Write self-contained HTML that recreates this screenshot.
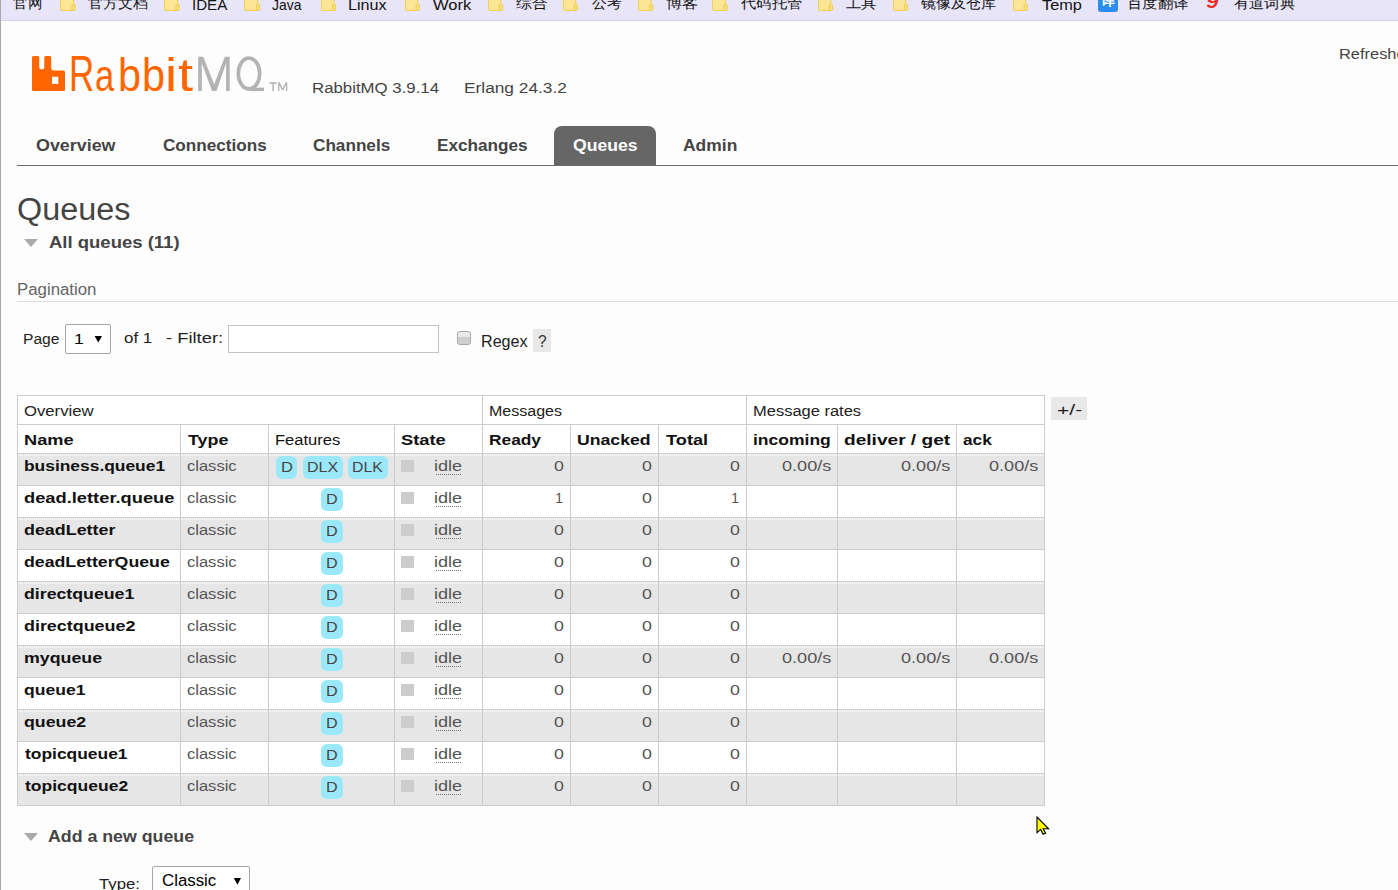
<!DOCTYPE html><html><head><meta charset="utf-8"><title>RabbitMQ Management</title><style>
html,body{margin:0;padding:0}body{width:1398px;height:890px;overflow:hidden;position:relative;background:#fdfdfd;font-family:"Liberation Sans",sans-serif}
.a{position:absolute}.tx{position:absolute;white-space:pre;transform-origin:0 0}
.hl{position:absolute;height:1px;background:#ccc}.vl{position:absolute;width:1px;background:#ccc}
.dot{position:absolute;height:2px;background-image:linear-gradient(to right,rgba(255,255,255,.85) 50%,transparent 50%);background-size:2px 2px}
.badge{position:absolute;background:#9ce8fb;border-radius:6px;height:23px}
</style></head><body>
<div class="a" style="left:0;top:0;width:1px;height:890px;background:#a9a9a9"></div>
<div class="a" style="left:1px;top:0;width:1397px;height:20px;background:#e8e5f8;border-bottom:1px solid #d7d1ee"></div>
<svg style="position:absolute;left:59.9px;top:0" width="17.5" height="12" viewBox="0 0 17.5 12"><rect x="0.5" y="-2" width="13.0" height="12.5" rx="1" fill="#fce594" stroke="#f3d250" stroke-width="1"/><rect x="12.0" y="4.5" width="3.2" height="6" rx="1.2" fill="#fbe07a" stroke="#eccb48" stroke-width="1"/></svg>
<svg style="position:absolute;left:164.2px;top:0" width="17.5" height="12" viewBox="0 0 17.5 12"><rect x="0.5" y="-2" width="13.0" height="12.5" rx="1" fill="#fce594" stroke="#f3d250" stroke-width="1"/><rect x="12.0" y="4.5" width="3.2" height="6" rx="1.2" fill="#fbe07a" stroke="#eccb48" stroke-width="1"/></svg>
<svg style="position:absolute;left:244.1px;top:0" width="17.9" height="12" viewBox="0 0 17.9 12"><rect x="0.5" y="-2" width="13.4" height="12.5" rx="1" fill="#fce594" stroke="#f3d250" stroke-width="1"/><rect x="12.4" y="4.5" width="3.2" height="6" rx="1.2" fill="#fbe07a" stroke="#eccb48" stroke-width="1"/></svg>
<svg style="position:absolute;left:321.4px;top:0" width="17.0" height="12" viewBox="0 0 17.0 12"><rect x="0.5" y="-2" width="12.5" height="12.5" rx="1" fill="#fce594" stroke="#f3d250" stroke-width="1"/><rect x="11.5" y="4.5" width="3.2" height="6" rx="1.2" fill="#fbe07a" stroke="#eccb48" stroke-width="1"/></svg>
<svg style="position:absolute;left:405.1px;top:0" width="16.6" height="12" viewBox="0 0 16.6 12"><rect x="0.5" y="-2" width="12.1" height="12.5" rx="1" fill="#fce594" stroke="#f3d250" stroke-width="1"/><rect x="11.1" y="4.5" width="3.2" height="6" rx="1.2" fill="#fbe07a" stroke="#eccb48" stroke-width="1"/></svg>
<svg style="position:absolute;left:488.0px;top:0" width="16.9" height="12" viewBox="0 0 16.9 12"><rect x="0.5" y="-2" width="12.4" height="12.5" rx="1" fill="#fce594" stroke="#f3d250" stroke-width="1"/><rect x="11.4" y="4.5" width="3.2" height="6" rx="1.2" fill="#fbe07a" stroke="#eccb48" stroke-width="1"/></svg>
<svg style="position:absolute;left:562.9px;top:0" width="16.7" height="12" viewBox="0 0 16.7 12"><rect x="0.5" y="-2" width="12.2" height="12.5" rx="1" fill="#fce594" stroke="#f3d250" stroke-width="1"/><rect x="11.2" y="4.5" width="3.2" height="6" rx="1.2" fill="#fbe07a" stroke="#eccb48" stroke-width="1"/></svg>
<svg style="position:absolute;left:638.1px;top:0" width="17.0" height="12" viewBox="0 0 17.0 12"><rect x="0.5" y="-2" width="12.5" height="12.5" rx="1" fill="#fce594" stroke="#f3d250" stroke-width="1"/><rect x="11.5" y="4.5" width="3.2" height="6" rx="1.2" fill="#fbe07a" stroke="#eccb48" stroke-width="1"/></svg>
<svg style="position:absolute;left:712.3px;top:0" width="17.4" height="12" viewBox="0 0 17.4 12"><rect x="0.5" y="-2" width="12.9" height="12.5" rx="1" fill="#fce594" stroke="#f3d250" stroke-width="1"/><rect x="11.9" y="4.5" width="3.2" height="6" rx="1.2" fill="#fbe07a" stroke="#eccb48" stroke-width="1"/></svg>
<svg style="position:absolute;left:817.9px;top:0" width="16.9" height="12" viewBox="0 0 16.9 12"><rect x="0.5" y="-2" width="12.4" height="12.5" rx="1" fill="#fce594" stroke="#f3d250" stroke-width="1"/><rect x="11.4" y="4.5" width="3.2" height="6" rx="1.2" fill="#fbe07a" stroke="#eccb48" stroke-width="1"/></svg>
<svg style="position:absolute;left:892.6px;top:0" width="16.8" height="12" viewBox="0 0 16.8 12"><rect x="0.5" y="-2" width="12.3" height="12.5" rx="1" fill="#fce594" stroke="#f3d250" stroke-width="1"/><rect x="11.3" y="4.5" width="3.2" height="6" rx="1.2" fill="#fbe07a" stroke="#eccb48" stroke-width="1"/></svg>
<svg style="position:absolute;left:1013.1px;top:0" width="16.6" height="12" viewBox="0 0 16.6 12"><rect x="0.5" y="-2" width="12.1" height="12.5" rx="1" fill="#fce594" stroke="#f3d250" stroke-width="1"/><rect x="11.1" y="4.5" width="3.2" height="6" rx="1.2" fill="#fbe07a" stroke="#eccb48" stroke-width="1"/></svg>
<div class="a" style="left:1098px;top:-4px;width:20px;height:16px;background:#2b8cf2;border-radius:3px"></div>
<div class="a" style="left:1101px;top:-7px;font:bold 14px/14px 'Liberation Sans',sans-serif;color:#fff">译</div>
<div class="a" style="left:1207px;top:-8px;font:italic bold 19px/19px 'Liberation Sans',sans-serif;color:#ee2b2b;transform:scaleX(1.15)">9</div>
<svg class="a" style="left:31px;top:55px" width="36" height="38" viewBox="0 0 36 38"><path fill="#ff6600" d="M1,2.5 Q1,1 2.5,1 L6.8,1 Q8.2,1 8.2,2.5 L8.2,12.5 Q8.2,14.2 10,14.2 L11.5,14.2 Q13.3,14.2 13.3,12.5 L13.3,2.5 Q13.3,1 14.8,1 L18.6,1 Q20.2,1 20.2,2.5 L20.2,13 Q20.2,15.5 22.5,15.5 L32.6,15.5 Q34,15.5 34,17 L34,34.5 Q34,36 32.6,36 L2.5,36 Q1,36 1,34.5 Z M21,22.5 L21,28.2 Q21,29 21.8,29 L26.5,29 Q27.3,29 27.3,28.2 L27.3,22.5 Q27.3,21.7 26.5,21.7 L21.8,21.7 Q21,21.7 21,22.5 Z"/></svg>
<svg class="a" style="left:0;top:0" width="300" height="100" viewBox="0 0 300 100"><path fill="#b3b3b3" d="M198.2,91.1 L198.2,56.8 L203.3,56.8 L214.2,84.5 L224.8,56.8 L229.7,56.8 L229.7,91.1 L226.1,91.1 L226.1,63 L216.5,91.1 L212,91.1 L201.8,63 L201.8,91.1 Z"/><ellipse cx="249" cy="73.5" rx="10.7" ry="15.4" fill="none" stroke="#b3b3b3" stroke-width="3.6"/><rect x="249.5" y="87.6" width="14.5" height="3.5" fill="#b3b3b3"/><path fill="#b3b3b3" d="M269.4,82.2 L276.9,82.2 L276.9,83.7 L273.9,83.7 L273.9,91.1 L272.4,91.1 L272.4,83.7 L269.4,83.7 Z"/><path fill="#b3b3b3" d="M278,91.1 L278,82.2 L279.6,82.2 L282.65,88.2 L285.7,82.2 L287.3,82.2 L287.3,91.1 L285.9,91.1 L285.9,85 L283.3,90.2 L282,90.2 L279.4,85 L279.4,91.1 Z"/></svg>
<div class="a" style="left:554px;top:126px;width:102px;height:39px;background:#666;border-radius:8px 8px 0 0"></div>
<div class="a" style="left:17px;top:165px;width:1381px;height:1px;background:#6b6b6b"></div>
<svg class="a" style="left:24px;top:239px" width="14" height="9" viewBox="0 0 14 9"><path d="M0,0 L14,0 L7,8 Z" fill="#aaa"/></svg>
<svg class="a" style="left:24px;top:833px" width="14" height="9" viewBox="0 0 14 9"><path d="M0,0 L14,0 L7,8 Z" fill="#aaa"/></svg>
<div class="a" style="left:17px;top:301px;width:1381px;height:1px;background:#dcdcdc"></div>
<div class="a" style="left:65px;top:324px;width:44px;height:28px;border:1px solid #a6a6a6;border-radius:2px;background:#fff"></div>
<svg class="a" style="left:94px;top:335px" width="9" height="9" viewBox="0 0 9 9"><path d="M0.6,1 L8,1 L4.3,7.6 Z" fill="#000"/></svg>
<div class="a" style="left:228px;top:325px;width:209px;height:26px;border:1px solid #c4c4c4;background:#fff"></div>
<div class="a" style="left:457px;top:331px;width:12px;height:12px;border:1px solid #a8a8a8;border-radius:3px;background:linear-gradient(#e9e9e9 0,#e9e9e9 40%,#cfcfcf 40%)"></div>
<div class="a" style="left:533px;top:329px;width:18px;height:23px;background:#e8e8e8"></div>
<div class="a" style="left:1051px;top:397px;width:36px;height:23px;background:#e8e8e8"></div>
<div class="a" style="left:17px;top:395px;width:1027px;height:58px;background:#fff"></div>
<div class="a" style="left:17px;top:453px;width:1027px;height:32px;background:#e6e6e6"></div>
<div class="dot" style="left:18px;top:454px;width:1026px"></div>
<div class="a" style="left:17px;top:485px;width:1027px;height:32px;background:#fff"></div>
<div class="a" style="left:17px;top:517px;width:1027px;height:32px;background:#e6e6e6"></div>
<div class="dot" style="left:18px;top:518px;width:1026px"></div>
<div class="a" style="left:17px;top:549px;width:1027px;height:32px;background:#fff"></div>
<div class="a" style="left:17px;top:581px;width:1027px;height:32px;background:#e6e6e6"></div>
<div class="dot" style="left:18px;top:582px;width:1026px"></div>
<div class="a" style="left:17px;top:613px;width:1027px;height:32px;background:#fff"></div>
<div class="a" style="left:17px;top:645px;width:1027px;height:32px;background:#e6e6e6"></div>
<div class="dot" style="left:18px;top:646px;width:1026px"></div>
<div class="a" style="left:17px;top:677px;width:1027px;height:32px;background:#fff"></div>
<div class="a" style="left:17px;top:709px;width:1027px;height:32px;background:#e6e6e6"></div>
<div class="dot" style="left:18px;top:710px;width:1026px"></div>
<div class="a" style="left:17px;top:741px;width:1027px;height:32px;background:#fff"></div>
<div class="a" style="left:17px;top:773px;width:1027px;height:32px;background:#e6e6e6"></div>
<div class="dot" style="left:18px;top:774px;width:1026px"></div>
<div class="hl" style="left:17px;top:395px;width:1028px"></div>
<div class="hl" style="left:17px;top:424px;width:1028px"></div>
<div class="hl" style="left:17px;top:453px;width:1028px"></div>
<div class="hl" style="left:17px;top:485px;width:1028px"></div>
<div class="hl" style="left:17px;top:517px;width:1028px"></div>
<div class="hl" style="left:17px;top:549px;width:1028px"></div>
<div class="hl" style="left:17px;top:581px;width:1028px"></div>
<div class="hl" style="left:17px;top:613px;width:1028px"></div>
<div class="hl" style="left:17px;top:645px;width:1028px"></div>
<div class="hl" style="left:17px;top:677px;width:1028px"></div>
<div class="hl" style="left:17px;top:709px;width:1028px"></div>
<div class="hl" style="left:17px;top:741px;width:1028px"></div>
<div class="hl" style="left:17px;top:773px;width:1028px"></div>
<div class="hl" style="left:17px;top:805px;width:1028px"></div>
<div class="vl" style="left:17px;top:395px;height:29px"></div>
<div class="vl" style="left:482px;top:395px;height:29px"></div>
<div class="vl" style="left:746px;top:395px;height:29px"></div>
<div class="vl" style="left:1044px;top:395px;height:29px"></div>
<div class="vl" style="left:17px;top:424px;height:382px"></div>
<div class="vl" style="left:180px;top:424px;height:382px"></div>
<div class="vl" style="left:268px;top:424px;height:382px"></div>
<div class="vl" style="left:394px;top:424px;height:382px"></div>
<div class="vl" style="left:482px;top:424px;height:382px"></div>
<div class="vl" style="left:570px;top:424px;height:382px"></div>
<div class="vl" style="left:658px;top:424px;height:382px"></div>
<div class="vl" style="left:746px;top:424px;height:382px"></div>
<div class="vl" style="left:837px;top:424px;height:382px"></div>
<div class="vl" style="left:956px;top:424px;height:382px"></div>
<div class="vl" style="left:1044px;top:424px;height:382px"></div>
<div class="a" style="left:401px;top:460px;width:13px;height:12px;background:#cccccc"></div>
<div class="a" style="left:436px;top:474px;width:25px;height:1px;background-image:linear-gradient(to right,#777 50%,transparent 50%);background-size:2px 1px"></div>
<div class="a" style="left:401px;top:492px;width:13px;height:12px;background:#cccccc"></div>
<div class="a" style="left:436px;top:506px;width:25px;height:1px;background-image:linear-gradient(to right,#777 50%,transparent 50%);background-size:2px 1px"></div>
<div class="a" style="left:401px;top:524px;width:13px;height:12px;background:#cccccc"></div>
<div class="a" style="left:436px;top:538px;width:25px;height:1px;background-image:linear-gradient(to right,#777 50%,transparent 50%);background-size:2px 1px"></div>
<div class="a" style="left:401px;top:556px;width:13px;height:12px;background:#cccccc"></div>
<div class="a" style="left:436px;top:570px;width:25px;height:1px;background-image:linear-gradient(to right,#777 50%,transparent 50%);background-size:2px 1px"></div>
<div class="a" style="left:401px;top:588px;width:13px;height:12px;background:#cccccc"></div>
<div class="a" style="left:436px;top:602px;width:25px;height:1px;background-image:linear-gradient(to right,#777 50%,transparent 50%);background-size:2px 1px"></div>
<div class="a" style="left:401px;top:620px;width:13px;height:12px;background:#cccccc"></div>
<div class="a" style="left:436px;top:634px;width:25px;height:1px;background-image:linear-gradient(to right,#777 50%,transparent 50%);background-size:2px 1px"></div>
<div class="a" style="left:401px;top:652px;width:13px;height:12px;background:#cccccc"></div>
<div class="a" style="left:436px;top:666px;width:25px;height:1px;background-image:linear-gradient(to right,#777 50%,transparent 50%);background-size:2px 1px"></div>
<div class="a" style="left:401px;top:684px;width:13px;height:12px;background:#cccccc"></div>
<div class="a" style="left:436px;top:698px;width:25px;height:1px;background-image:linear-gradient(to right,#777 50%,transparent 50%);background-size:2px 1px"></div>
<div class="a" style="left:401px;top:716px;width:13px;height:12px;background:#cccccc"></div>
<div class="a" style="left:436px;top:730px;width:25px;height:1px;background-image:linear-gradient(to right,#777 50%,transparent 50%);background-size:2px 1px"></div>
<div class="a" style="left:401px;top:748px;width:13px;height:12px;background:#cccccc"></div>
<div class="a" style="left:436px;top:762px;width:25px;height:1px;background-image:linear-gradient(to right,#777 50%,transparent 50%);background-size:2px 1px"></div>
<div class="a" style="left:401px;top:780px;width:13px;height:12px;background:#cccccc"></div>
<div class="a" style="left:436px;top:794px;width:25px;height:1px;background-image:linear-gradient(to right,#777 50%,transparent 50%);background-size:2px 1px"></div>
<div class="a" style="left:152px;top:866px;width:96px;height:30px;border:1px solid #a6a6a6;border-radius:2px;background:#fff"></div>
<svg class="a" style="left:233px;top:877px" width="9" height="9" viewBox="0 0 9 9"><path d="M0.8,1 L8,1 L4.4,7.8 Z" fill="#000"/></svg>
<div class="badge" style="left:276px;top:456px;width:21px"></div>
<div class="badge" style="left:303px;top:456px;width:40px"></div>
<div class="badge" style="left:348px;top:456px;width:40px"></div>
<div class="badge" style="left:321px;top:488px;width:22px"></div>
<div class="badge" style="left:321px;top:520px;width:22px"></div>
<div class="badge" style="left:321px;top:552px;width:22px"></div>
<div class="badge" style="left:321px;top:584px;width:22px"></div>
<div class="badge" style="left:321px;top:616px;width:22px"></div>
<div class="badge" style="left:321px;top:648px;width:22px"></div>
<div class="badge" style="left:321px;top:680px;width:22px"></div>
<div class="badge" style="left:321px;top:712px;width:22px"></div>
<div class="badge" style="left:321px;top:744px;width:22px"></div>
<div class="badge" style="left:321px;top:776px;width:22px"></div>
<span class="tx" style="left:13.40px;top:-3px;font:normal 13.5px/13.5px 'Liberation Sans', sans-serif;color:#111;transform:scaleX(1.0407);">官网</span>
<span class="tx" style="left:88.18px;top:-3px;font:normal 13.5px/13.5px 'Liberation Sans', sans-serif;color:#111;transform:scaleX(1.0785);">官方文档</span>
<span class="tx" style="left:191.55px;top:-3px;font:normal 15px/15px 'Liberation Sans', sans-serif;color:#111;transform:scaleX(1.0080);">IDEA</span>
<span class="tx" style="left:272.46px;top:-3px;font:normal 15px/15px 'Liberation Sans', sans-serif;color:#111;transform:scaleX(0.9282);">Java</span>
<span class="tx" style="left:348.40px;top:-3px;font:normal 15px/15px 'Liberation Sans', sans-serif;color:#111;transform:scaleX(1.0747);">Linux</span>
<span class="tx" style="left:432.88px;top:-3px;font:normal 15px/15px 'Liberation Sans', sans-serif;color:#111;transform:scaleX(1.0998);">Work</span>
<span class="tx" style="left:515.83px;top:-3px;font:normal 13.5px/13.5px 'Liberation Sans', sans-serif;color:#111;transform:scaleX(1.1274);">综合</span>
<span class="tx" style="left:591.70px;top:-3px;font:normal 13.5px/13.5px 'Liberation Sans', sans-serif;color:#111;transform:scaleX(1.0595);">公考</span>
<span class="tx" style="left:666.21px;top:-3px;font:normal 13.5px/13.5px 'Liberation Sans', sans-serif;color:#111;transform:scaleX(1.1582);">博客</span>
<span class="tx" style="left:740.63px;top:-3px;font:normal 13.5px/13.5px 'Liberation Sans', sans-serif;color:#111;transform:scaleX(1.0893);">代码托管</span>
<span class="tx" style="left:846.26px;top:-3px;font:normal 13.5px/13.5px 'Liberation Sans', sans-serif;color:#111;transform:scaleX(1.1014);">工具</span>
<span class="tx" style="left:921.00px;top:-3px;font:normal 13.5px/13.5px 'Liberation Sans', sans-serif;color:#111;transform:scaleX(1.0754);">镜像及仓库</span>
<span class="tx" style="left:1042.18px;top:-3px;font:normal 15px/15px 'Liberation Sans', sans-serif;color:#111;transform:scaleX(1.0885);">Temp</span>
<span class="tx" style="left:1126.76px;top:-3px;font:normal 13.5px/13.5px 'Liberation Sans', sans-serif;color:#111;transform:scaleX(1.1015);">百度翻译</span>
<span class="tx" style="left:1233.72px;top:-3px;font:normal 13.5px/13.5px 'Liberation Sans', sans-serif;color:#111;transform:scaleX(1.0858);">有道词典</span>
<span class="tx" style="left:311.86px;top:80px;font:normal 15.5px/15.5px 'Liberation Sans', sans-serif;color:#444;transform:scaleX(1.0841);">RabbitMQ 3.9.14</span>
<span class="tx" style="left:463.72px;top:80px;font:normal 15.5px/15.5px 'Liberation Sans', sans-serif;color:#444;transform:scaleX(1.1152);">Erlang 24.3.2</span>
<span class="tx" style="left:1339.20px;top:46px;font:normal 15.5px/15.5px 'Liberation Sans', sans-serif;color:#444;transform:scaleX(1.0596);">Refreshe</span>
<span class="tx" style="left:36.43px;top:137px;font:bold 16.5px/16.5px 'Liberation Sans', sans-serif;color:#444;transform:scaleX(1.0834);">Overview</span>
<span class="tx" style="left:162.86px;top:137px;font:bold 16.5px/16.5px 'Liberation Sans', sans-serif;color:#444;transform:scaleX(1.0385);">Connections</span>
<span class="tx" style="left:312.56px;top:137px;font:bold 16.5px/16.5px 'Liberation Sans', sans-serif;color:#444;transform:scaleX(1.0396);">Channels</span>
<span class="tx" style="left:436.54px;top:137px;font:bold 16.5px/16.5px 'Liberation Sans', sans-serif;color:#444;transform:scaleX(1.0396);">Exchanges</span>
<span class="tx" style="left:572.64px;top:137px;font:bold 16.5px/16.5px 'Liberation Sans', sans-serif;color:#fff;transform:scaleX(1.0655);">Queues</span>
<span class="tx" style="left:682.56px;top:137px;font:bold 16.5px/16.5px 'Liberation Sans', sans-serif;color:#444;transform:scaleX(1.0581);">Admin</span>
<span class="tx" style="left:17.31px;top:194px;font:normal 31px/31px 'Liberation Sans', sans-serif;color:#444;transform:scaleX(1.0444);">Queues</span>
<span class="tx" style="left:48.61px;top:235px;font:bold 16px/16px 'Liberation Sans', sans-serif;color:#444;transform:scaleX(1.1560);">All queues (11)</span>
<span class="tx" style="left:16.77px;top:282px;font:normal 16px/16px 'Liberation Sans', sans-serif;color:#666;transform:scaleX(1.0503);">Pagination</span>
<span class="tx" style="left:23.27px;top:331px;font:normal 15.5px/15.5px 'Liberation Sans', sans-serif;color:#222;transform:scaleX(1.0065);">Page</span>
<span class="tx" style="left:124.04px;top:330px;font:normal 15.5px/15.5px 'Liberation Sans', sans-serif;color:#222;transform:scaleX(1.0915);">of 1</span>
<span class="tx" style="left:165.88px;top:330px;font:normal 15.5px/15.5px 'Liberation Sans', sans-serif;color:#222;transform:scaleX(1.1850);">- Filter:</span>
<span class="tx" style="left:481.33px;top:334px;font:normal 16px/16px 'Liberation Sans', sans-serif;color:#222;transform:scaleX(1.0064);">Regex</span>
<span class="tx" style="left:537.93px;top:334px;font:normal 16px/16px 'Liberation Sans', sans-serif;color:#333;transform:scaleX(0.9623);">?</span>
<span class="tx" style="left:74.06px;top:331px;font:normal 15.5px/15.5px 'Liberation Sans', sans-serif;color:#000;transform:scaleX(1.1377);">1</span>
<span class="tx" style="left:1056.98px;top:402px;font:normal 15.5px/15.5px 'Liberation Sans', sans-serif;color:#222;transform:scaleX(1.3634);">+/-</span>
<span class="tx" style="left:24.38px;top:403px;font:normal 15.5px/15.5px 'Liberation Sans', sans-serif;color:#222;transform:scaleX(1.0768);">Overview</span>
<span class="tx" style="left:488.73px;top:403px;font:normal 15.5px/15.5px 'Liberation Sans', sans-serif;color:#222;transform:scaleX(1.0326);">Messages</span>
<span class="tx" style="left:752.79px;top:403px;font:normal 15.5px/15.5px 'Liberation Sans', sans-serif;color:#222;transform:scaleX(1.0635);">Message rates</span>
<span class="tx" style="left:23.84px;top:432px;font:bold 15.5px/15.5px 'Liberation Sans', sans-serif;color:#111;transform:scaleX(1.1741);">Name</span>
<span class="tx" style="left:187.72px;top:432px;font:bold 15.5px/15.5px 'Liberation Sans', sans-serif;color:#111;transform:scaleX(1.1523);">Type</span>
<span class="tx" style="left:275.09px;top:432px;font:normal 15.5px/15.5px 'Liberation Sans', sans-serif;color:#111;transform:scaleX(1.0663);">Features</span>
<span class="tx" style="left:400.86px;top:432px;font:bold 15.5px/15.5px 'Liberation Sans', sans-serif;color:#111;transform:scaleX(1.1804);">State</span>
<span class="tx" style="left:489.31px;top:432px;font:bold 15.5px/15.5px 'Liberation Sans', sans-serif;color:#111;transform:scaleX(1.1178);">Ready</span>
<span class="tx" style="left:576.76px;top:432px;font:bold 15.5px/15.5px 'Liberation Sans', sans-serif;color:#111;transform:scaleX(1.1383);">Unacked</span>
<span class="tx" style="left:666.11px;top:432px;font:bold 15.5px/15.5px 'Liberation Sans', sans-serif;color:#111;transform:scaleX(1.1738);">Total</span>
<span class="tx" style="left:752.96px;top:432px;font:bold 15.5px/15.5px 'Liberation Sans', sans-serif;color:#111;transform:scaleX(1.1289);">incoming</span>
<span class="tx" style="left:844.12px;top:432px;font:bold 15.5px/15.5px 'Liberation Sans', sans-serif;color:#111;transform:scaleX(1.2320);">deliver / get</span>
<span class="tx" style="left:963.41px;top:432px;font:bold 15.5px/15.5px 'Liberation Sans', sans-serif;color:#111;transform:scaleX(1.1113);">ack</span>
<span class="tx" style="left:23.90px;top:458px;font:bold 15.5px/15.5px 'Liberation Sans', sans-serif;color:#111;transform:scaleX(1.1218);">business.queue1</span>
<span class="tx" style="left:187.26px;top:458px;font:normal 15.5px/15.5px 'Liberation Sans', sans-serif;color:#555;transform:scaleX(1.0660);">classic</span>
<span class="tx" style="left:434.03px;top:458px;font:normal 15.5px/15.5px 'Liberation Sans', sans-serif;color:#555;transform:scaleX(1.1648);">idle</span>
<span class="tx" style="left:554.14px;top:458px;font:normal 15.5px/15.5px 'Liberation Sans', sans-serif;color:#555;transform:scaleX(1.1472);">0</span>
<span class="tx" style="left:642.14px;top:458px;font:normal 15.5px/15.5px 'Liberation Sans', sans-serif;color:#555;transform:scaleX(1.1472);">0</span>
<span class="tx" style="left:730.14px;top:458px;font:normal 15.5px/15.5px 'Liberation Sans', sans-serif;color:#555;transform:scaleX(1.1472);">0</span>
<span class="tx" style="left:782.43px;top:458px;font:normal 15.5px/15.5px 'Liberation Sans', sans-serif;color:#555;transform:scaleX(1.1698);">0.00/s</span>
<span class="tx" style="left:901.43px;top:458px;font:normal 15.5px/15.5px 'Liberation Sans', sans-serif;color:#555;transform:scaleX(1.1698);">0.00/s</span>
<span class="tx" style="left:989.43px;top:458px;font:normal 15.5px/15.5px 'Liberation Sans', sans-serif;color:#555;transform:scaleX(1.1698);">0.00/s</span>
<span class="tx" style="left:280.52px;top:460px;font:normal 14px/14px 'Liberation Sans', sans-serif;color:#444;transform:scaleX(1.1839)">D</span>
<span class="tx" style="left:306.88px;top:460px;font:normal 14px/14px 'Liberation Sans', sans-serif;color:#444;transform:scaleX(1.1427)">DLX</span>
<span class="tx" style="left:352.49px;top:460px;font:normal 14px/14px 'Liberation Sans', sans-serif;color:#444;transform:scaleX(1.1281)">DLK</span>
<span class="tx" style="left:24.36px;top:490px;font:bold 15.5px/15.5px 'Liberation Sans', sans-serif;color:#111;transform:scaleX(1.1800);">dead.letter.queue</span>
<span class="tx" style="left:187.26px;top:490px;font:normal 15.5px/15.5px 'Liberation Sans', sans-serif;color:#555;transform:scaleX(1.0660);">classic</span>
<span class="tx" style="left:434.03px;top:490px;font:normal 15.5px/15.5px 'Liberation Sans', sans-serif;color:#555;transform:scaleX(1.1648);">idle</span>
<span class="tx" style="left:555.01px;top:490px;font:normal 15.5px/15.5px 'Liberation Sans', sans-serif;color:#555;transform:scaleX(0.9405);">1</span>
<span class="tx" style="left:642.14px;top:490px;font:normal 15.5px/15.5px 'Liberation Sans', sans-serif;color:#555;transform:scaleX(1.1472);">0</span>
<span class="tx" style="left:731.01px;top:490px;font:normal 15.5px/15.5px 'Liberation Sans', sans-serif;color:#555;transform:scaleX(0.9405);">1</span>
<span class="tx" style="left:326.06px;top:492px;font:normal 14px/14px 'Liberation Sans', sans-serif;color:#444;transform:scaleX(1.1536)">D</span>
<span class="tx" style="left:24.38px;top:522px;font:bold 15.5px/15.5px 'Liberation Sans', sans-serif;color:#111;transform:scaleX(1.1537);">deadLetter</span>
<span class="tx" style="left:187.26px;top:522px;font:normal 15.5px/15.5px 'Liberation Sans', sans-serif;color:#555;transform:scaleX(1.0660);">classic</span>
<span class="tx" style="left:434.03px;top:522px;font:normal 15.5px/15.5px 'Liberation Sans', sans-serif;color:#555;transform:scaleX(1.1648);">idle</span>
<span class="tx" style="left:554.14px;top:522px;font:normal 15.5px/15.5px 'Liberation Sans', sans-serif;color:#555;transform:scaleX(1.1472);">0</span>
<span class="tx" style="left:642.14px;top:522px;font:normal 15.5px/15.5px 'Liberation Sans', sans-serif;color:#555;transform:scaleX(1.1472);">0</span>
<span class="tx" style="left:730.14px;top:522px;font:normal 15.5px/15.5px 'Liberation Sans', sans-serif;color:#555;transform:scaleX(1.1472);">0</span>
<span class="tx" style="left:326.06px;top:524px;font:normal 14px/14px 'Liberation Sans', sans-serif;color:#444;transform:scaleX(1.1536)">D</span>
<span class="tx" style="left:24.38px;top:554px;font:bold 15.5px/15.5px 'Liberation Sans', sans-serif;color:#111;transform:scaleX(1.1436);">deadLetterQueue</span>
<span class="tx" style="left:187.26px;top:554px;font:normal 15.5px/15.5px 'Liberation Sans', sans-serif;color:#555;transform:scaleX(1.0660);">classic</span>
<span class="tx" style="left:434.03px;top:554px;font:normal 15.5px/15.5px 'Liberation Sans', sans-serif;color:#555;transform:scaleX(1.1648);">idle</span>
<span class="tx" style="left:554.14px;top:554px;font:normal 15.5px/15.5px 'Liberation Sans', sans-serif;color:#555;transform:scaleX(1.1472);">0</span>
<span class="tx" style="left:642.14px;top:554px;font:normal 15.5px/15.5px 'Liberation Sans', sans-serif;color:#555;transform:scaleX(1.1472);">0</span>
<span class="tx" style="left:730.14px;top:554px;font:normal 15.5px/15.5px 'Liberation Sans', sans-serif;color:#555;transform:scaleX(1.1472);">0</span>
<span class="tx" style="left:326.06px;top:556px;font:normal 14px/14px 'Liberation Sans', sans-serif;color:#444;transform:scaleX(1.1536)">D</span>
<span class="tx" style="left:24.38px;top:586px;font:bold 15.5px/15.5px 'Liberation Sans', sans-serif;color:#111;transform:scaleX(1.1432);">directqueue1</span>
<span class="tx" style="left:187.26px;top:586px;font:normal 15.5px/15.5px 'Liberation Sans', sans-serif;color:#555;transform:scaleX(1.0660);">classic</span>
<span class="tx" style="left:434.03px;top:586px;font:normal 15.5px/15.5px 'Liberation Sans', sans-serif;color:#555;transform:scaleX(1.1648);">idle</span>
<span class="tx" style="left:554.14px;top:586px;font:normal 15.5px/15.5px 'Liberation Sans', sans-serif;color:#555;transform:scaleX(1.1472);">0</span>
<span class="tx" style="left:642.14px;top:586px;font:normal 15.5px/15.5px 'Liberation Sans', sans-serif;color:#555;transform:scaleX(1.1472);">0</span>
<span class="tx" style="left:730.14px;top:586px;font:normal 15.5px/15.5px 'Liberation Sans', sans-serif;color:#555;transform:scaleX(1.1472);">0</span>
<span class="tx" style="left:326.06px;top:588px;font:normal 14px/14px 'Liberation Sans', sans-serif;color:#444;transform:scaleX(1.1536)">D</span>
<span class="tx" style="left:24.38px;top:618px;font:bold 15.5px/15.5px 'Liberation Sans', sans-serif;color:#111;transform:scaleX(1.1549);">directqueue2</span>
<span class="tx" style="left:187.26px;top:618px;font:normal 15.5px/15.5px 'Liberation Sans', sans-serif;color:#555;transform:scaleX(1.0660);">classic</span>
<span class="tx" style="left:434.03px;top:618px;font:normal 15.5px/15.5px 'Liberation Sans', sans-serif;color:#555;transform:scaleX(1.1648);">idle</span>
<span class="tx" style="left:554.14px;top:618px;font:normal 15.5px/15.5px 'Liberation Sans', sans-serif;color:#555;transform:scaleX(1.1472);">0</span>
<span class="tx" style="left:642.14px;top:618px;font:normal 15.5px/15.5px 'Liberation Sans', sans-serif;color:#555;transform:scaleX(1.1472);">0</span>
<span class="tx" style="left:730.14px;top:618px;font:normal 15.5px/15.5px 'Liberation Sans', sans-serif;color:#555;transform:scaleX(1.1472);">0</span>
<span class="tx" style="left:326.06px;top:620px;font:normal 14px/14px 'Liberation Sans', sans-serif;color:#444;transform:scaleX(1.1536)">D</span>
<span class="tx" style="left:23.87px;top:650px;font:bold 15.5px/15.5px 'Liberation Sans', sans-serif;color:#111;transform:scaleX(1.1466);">myqueue</span>
<span class="tx" style="left:187.26px;top:650px;font:normal 15.5px/15.5px 'Liberation Sans', sans-serif;color:#555;transform:scaleX(1.0660);">classic</span>
<span class="tx" style="left:434.03px;top:650px;font:normal 15.5px/15.5px 'Liberation Sans', sans-serif;color:#555;transform:scaleX(1.1648);">idle</span>
<span class="tx" style="left:554.14px;top:650px;font:normal 15.5px/15.5px 'Liberation Sans', sans-serif;color:#555;transform:scaleX(1.1472);">0</span>
<span class="tx" style="left:642.14px;top:650px;font:normal 15.5px/15.5px 'Liberation Sans', sans-serif;color:#555;transform:scaleX(1.1472);">0</span>
<span class="tx" style="left:730.14px;top:650px;font:normal 15.5px/15.5px 'Liberation Sans', sans-serif;color:#555;transform:scaleX(1.1472);">0</span>
<span class="tx" style="left:782.43px;top:650px;font:normal 15.5px/15.5px 'Liberation Sans', sans-serif;color:#555;transform:scaleX(1.1698);">0.00/s</span>
<span class="tx" style="left:901.43px;top:650px;font:normal 15.5px/15.5px 'Liberation Sans', sans-serif;color:#555;transform:scaleX(1.1698);">0.00/s</span>
<span class="tx" style="left:989.43px;top:650px;font:normal 15.5px/15.5px 'Liberation Sans', sans-serif;color:#555;transform:scaleX(1.1698);">0.00/s</span>
<span class="tx" style="left:326.06px;top:652px;font:normal 14px/14px 'Liberation Sans', sans-serif;color:#444;transform:scaleX(1.1536)">D</span>
<span class="tx" style="left:24.39px;top:682px;font:bold 15.5px/15.5px 'Liberation Sans', sans-serif;color:#111;transform:scaleX(1.1322);">queue1</span>
<span class="tx" style="left:187.26px;top:682px;font:normal 15.5px/15.5px 'Liberation Sans', sans-serif;color:#555;transform:scaleX(1.0660);">classic</span>
<span class="tx" style="left:434.03px;top:682px;font:normal 15.5px/15.5px 'Liberation Sans', sans-serif;color:#555;transform:scaleX(1.1648);">idle</span>
<span class="tx" style="left:554.14px;top:682px;font:normal 15.5px/15.5px 'Liberation Sans', sans-serif;color:#555;transform:scaleX(1.1472);">0</span>
<span class="tx" style="left:642.14px;top:682px;font:normal 15.5px/15.5px 'Liberation Sans', sans-serif;color:#555;transform:scaleX(1.1472);">0</span>
<span class="tx" style="left:730.14px;top:682px;font:normal 15.5px/15.5px 'Liberation Sans', sans-serif;color:#555;transform:scaleX(1.1472);">0</span>
<span class="tx" style="left:326.06px;top:684px;font:normal 14px/14px 'Liberation Sans', sans-serif;color:#444;transform:scaleX(1.1536)">D</span>
<span class="tx" style="left:24.38px;top:714px;font:bold 15.5px/15.5px 'Liberation Sans', sans-serif;color:#111;transform:scaleX(1.1456);">queue2</span>
<span class="tx" style="left:187.26px;top:714px;font:normal 15.5px/15.5px 'Liberation Sans', sans-serif;color:#555;transform:scaleX(1.0660);">classic</span>
<span class="tx" style="left:434.03px;top:714px;font:normal 15.5px/15.5px 'Liberation Sans', sans-serif;color:#555;transform:scaleX(1.1648);">idle</span>
<span class="tx" style="left:554.14px;top:714px;font:normal 15.5px/15.5px 'Liberation Sans', sans-serif;color:#555;transform:scaleX(1.1472);">0</span>
<span class="tx" style="left:642.14px;top:714px;font:normal 15.5px/15.5px 'Liberation Sans', sans-serif;color:#555;transform:scaleX(1.1472);">0</span>
<span class="tx" style="left:730.14px;top:714px;font:normal 15.5px/15.5px 'Liberation Sans', sans-serif;color:#555;transform:scaleX(1.1472);">0</span>
<span class="tx" style="left:326.06px;top:716px;font:normal 14px/14px 'Liberation Sans', sans-serif;color:#444;transform:scaleX(1.1536)">D</span>
<span class="tx" style="left:24.90px;top:746px;font:bold 15.5px/15.5px 'Liberation Sans', sans-serif;color:#111;transform:scaleX(1.1234);">topicqueue1</span>
<span class="tx" style="left:187.26px;top:746px;font:normal 15.5px/15.5px 'Liberation Sans', sans-serif;color:#555;transform:scaleX(1.0660);">classic</span>
<span class="tx" style="left:434.03px;top:746px;font:normal 15.5px/15.5px 'Liberation Sans', sans-serif;color:#555;transform:scaleX(1.1648);">idle</span>
<span class="tx" style="left:554.14px;top:746px;font:normal 15.5px/15.5px 'Liberation Sans', sans-serif;color:#555;transform:scaleX(1.1472);">0</span>
<span class="tx" style="left:642.14px;top:746px;font:normal 15.5px/15.5px 'Liberation Sans', sans-serif;color:#555;transform:scaleX(1.1472);">0</span>
<span class="tx" style="left:730.14px;top:746px;font:normal 15.5px/15.5px 'Liberation Sans', sans-serif;color:#555;transform:scaleX(1.1472);">0</span>
<span class="tx" style="left:326.06px;top:748px;font:normal 14px/14px 'Liberation Sans', sans-serif;color:#444;transform:scaleX(1.1536)">D</span>
<span class="tx" style="left:24.90px;top:778px;font:bold 15.5px/15.5px 'Liberation Sans', sans-serif;color:#111;transform:scaleX(1.1302);">topicqueue2</span>
<span class="tx" style="left:187.26px;top:778px;font:normal 15.5px/15.5px 'Liberation Sans', sans-serif;color:#555;transform:scaleX(1.0660);">classic</span>
<span class="tx" style="left:434.03px;top:778px;font:normal 15.5px/15.5px 'Liberation Sans', sans-serif;color:#555;transform:scaleX(1.1648);">idle</span>
<span class="tx" style="left:554.14px;top:778px;font:normal 15.5px/15.5px 'Liberation Sans', sans-serif;color:#555;transform:scaleX(1.1472);">0</span>
<span class="tx" style="left:642.14px;top:778px;font:normal 15.5px/15.5px 'Liberation Sans', sans-serif;color:#555;transform:scaleX(1.1472);">0</span>
<span class="tx" style="left:730.14px;top:778px;font:normal 15.5px/15.5px 'Liberation Sans', sans-serif;color:#555;transform:scaleX(1.1472);">0</span>
<span class="tx" style="left:326.06px;top:780px;font:normal 14px/14px 'Liberation Sans', sans-serif;color:#444;transform:scaleX(1.1536)">D</span>
<span class="tx" style="left:48.33px;top:829px;font:bold 16px/16px 'Liberation Sans', sans-serif;color:#444;transform:scaleX(1.1100);">Add a new queue</span>
<span class="tx" style="left:98.88px;top:876px;font:normal 15.5px/15.5px 'Liberation Sans', sans-serif;color:#222;transform:scaleX(1.0807);">Type:</span>
<span class="tx" style="left:161.81px;top:873px;font:normal 16.8px/16.8px 'Liberation Sans', sans-serif;color:#000;transform:scaleX(1.0039);">Classic</span>
<span class="tx" style="left:68.82px;top:50px;font:normal 49.7px/49.7px 'Liberation Sans', sans-serif;color:#ff6600;transform:scaleX(0.7035);">R</span>
<span class="tx" style="left:94.76px;top:54px;font:normal 44px/44px 'Liberation Sans', sans-serif;color:#ff6600;transform:scaleX(0.7839);">a</span>
<span class="tx" style="left:118.19px;top:51px;font:normal 47px/47px 'Liberation Sans', sans-serif;color:#ff6600;transform:scaleX(0.8813);">b</span>
<span class="tx" style="left:141.89px;top:51px;font:normal 47px/47px 'Liberation Sans', sans-serif;color:#ff6600;transform:scaleX(0.8813);">b</span>
<span class="tx" style="left:165.49px;top:51px;font:normal 47px/47px 'Liberation Sans', sans-serif;color:#ff6600;transform:scaleX(1.1525);">i</span>
<span class="tx" style="left:178.36px;top:52px;font:normal 46px/46px 'Liberation Sans', sans-serif;color:#ff6600;transform:scaleX(1.1780);">t</span>
<svg class="a" style="left:1035.5px;top:815.5px" width="16" height="22" viewBox="0 0 16 22"><path d="M1,1 L1,16.8 L4.6,13.4 L7.2,18.2 L9.6,17.2 L7.2,12.8 L12.6,12.8 Z" fill="#ffff00" stroke="#000" stroke-width="1.1" stroke-linejoin="miter"/></svg>
</body></html>
